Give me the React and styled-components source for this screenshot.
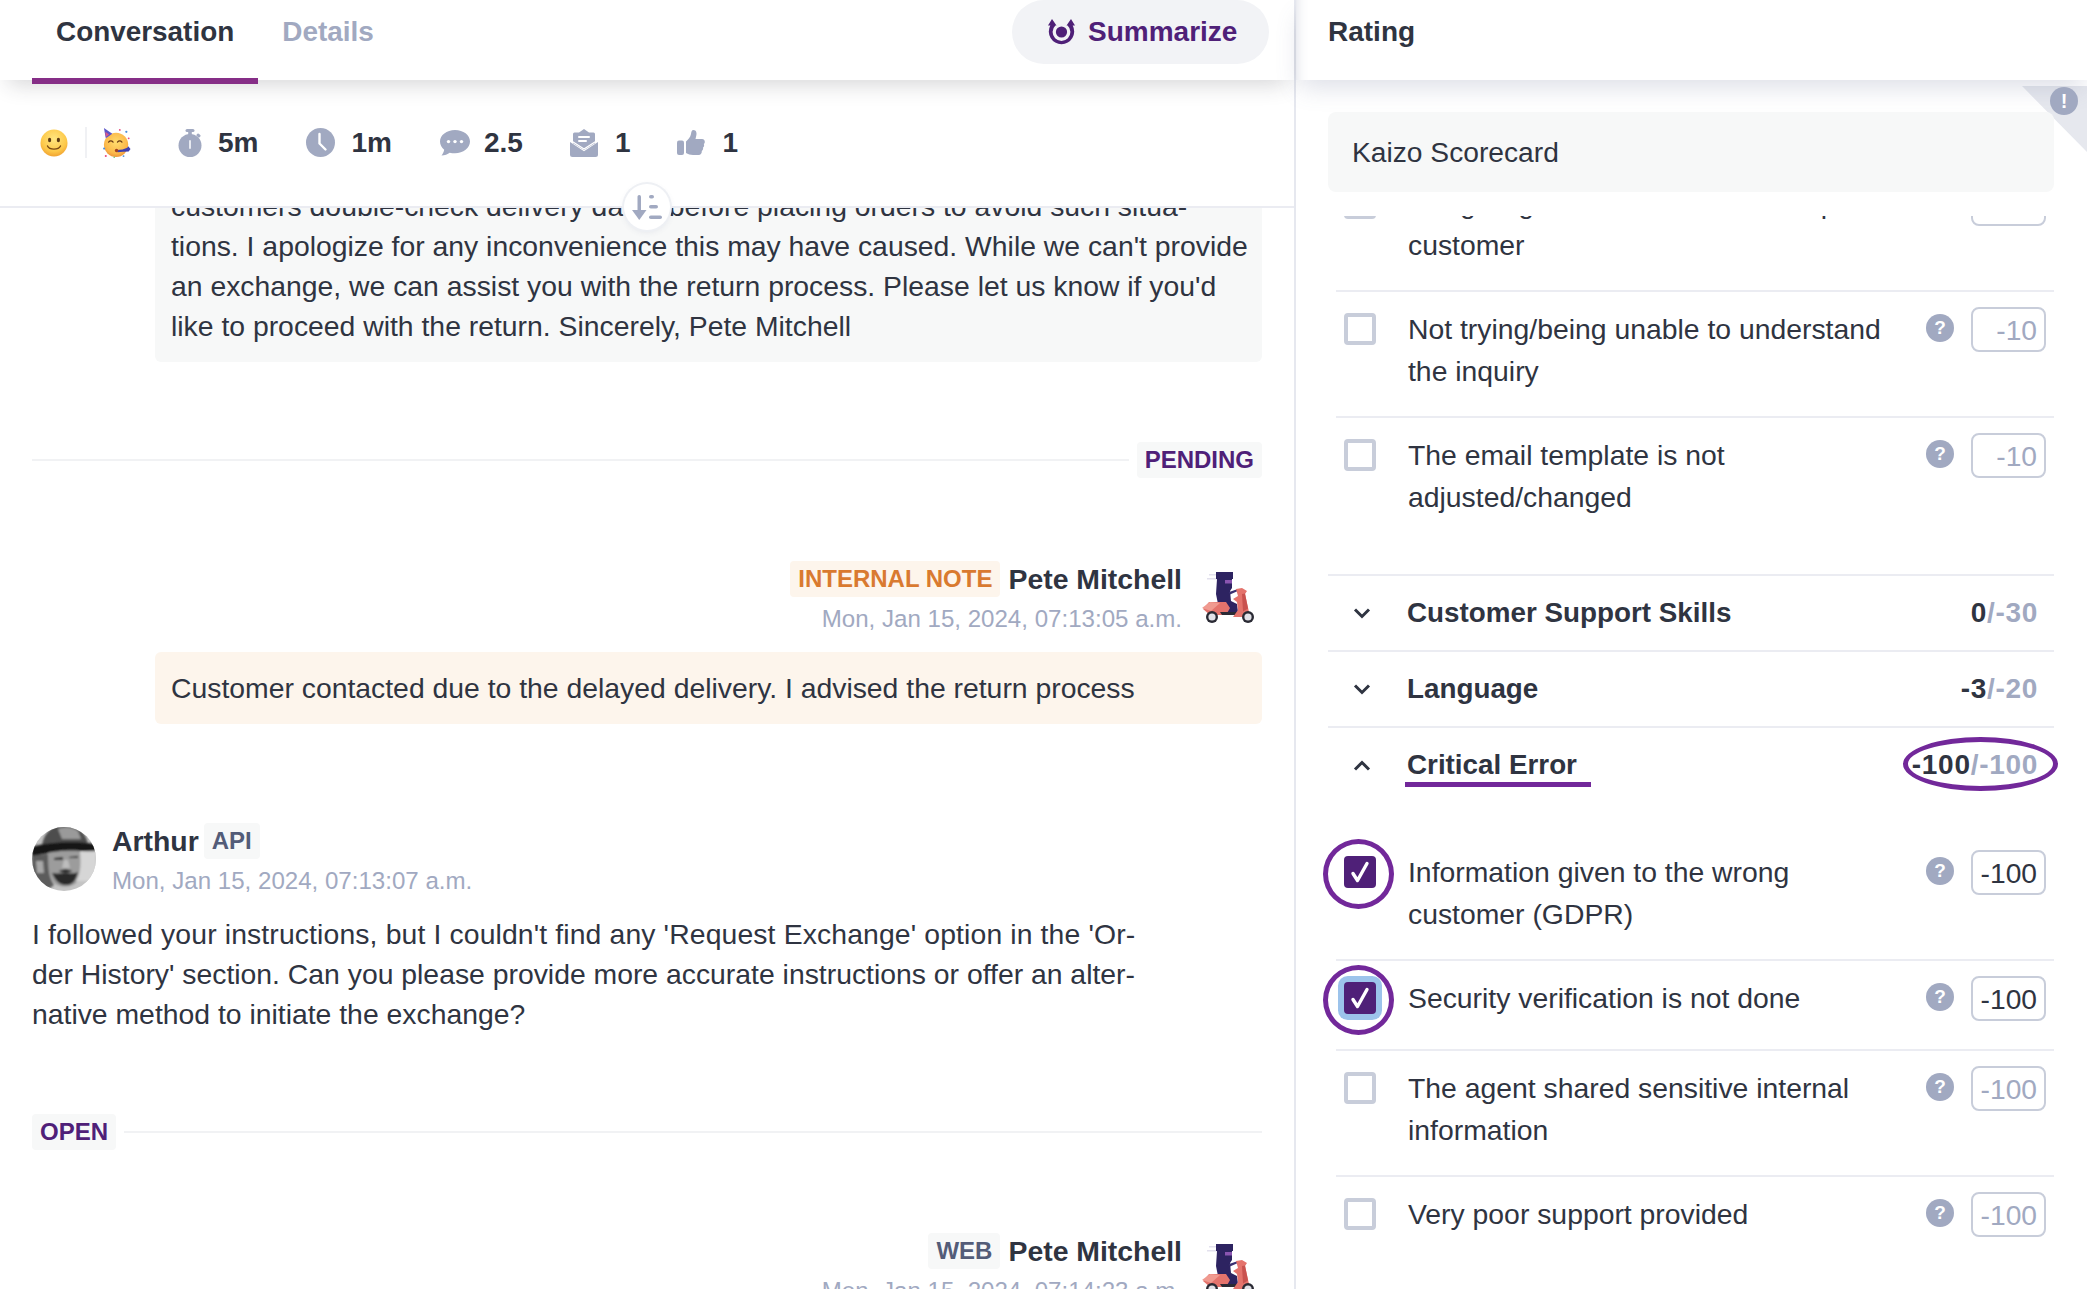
import React from "react";
import styled, { createGlobalStyle } from "styled-components";

const ink = "#2f3441";
const muted = "#a1a9c1";
const purple = "#4f2078";
const ring = "#72289a";
const line = "#ebecf2";
const soft = "#f7f8f8";

const Global = createGlobalStyle`
  html, body { margin: 0; padding: 0; height: 100%; background: #fff; }
  body { font-family: "Liberation Sans", Arial, sans-serif; color: ${ink}; overflow: hidden; }
  * { box-sizing: border-box; }
`;

const Page = styled.div`
  display: flex;
  width: 2087px;
  height: 1289px;
  overflow: hidden;
  background: #fff;
`;

const LeftPanel = styled.section`
  display: flex;
  flex-direction: column;
  width: 1296px;
  flex: none;
  border-right: 2px solid #e6e8ef;
`;

const TabBar = styled.header`
  position: relative;
  z-index: 3;
  display: flex;
  align-items: flex-start;
  height: 80px;
  flex: none;
  padding: 0 25px 0 32px;
  background: #fff;
  box-shadow: 0 12px 22px -8px rgba(40, 40, 50, 0.2);
`;

const Tab = styled.div`
  height: 84px;
  padding: 14px 24px 0;
  font-size: 27.9px;
  line-height: 36px;
  font-weight: 700;
  color: ${(p) => (p.$active ? ink : muted)};
  border-bottom: 6px solid ${(p) => (p.$active ? "#862e87" : "transparent")};
`;

const SummarizeButton = styled.button`
  display: flex;
  align-items: center;
  gap: 13px;
  height: 64px;
  width: 257px;
  margin-left: auto;
  padding: 0 0 0 36px;
  border: 0;
  border-radius: 32px;
  background: #f2f3f6;
  color: ${purple};
  font: 700 28px/36px "Liberation Sans", Arial, sans-serif;
`;

const StatBar = styled.div`
  position: relative;
  z-index: 2;
  display: flex;
  align-items: center;
  height: 128px;
  flex: none;
  padding: 0 0 1px 40px;
  background: #fff;
  border-bottom: 2px solid ${line};
`;

const EmojiDivider = styled.span`
  width: 2px;
  height: 31px;
  margin: 0 16px 0 17px;
  background: #f0f1f4;
`;

const Stat = styled.div`
  display: flex;
  align-items: center;
  gap: ${(p) => p.$gap || 16}px;
  margin-left: ${(p) => p.$left}px;
  font-size: 28px;
  line-height: 36px;
  font-weight: 700;
`;

const SortButton = styled.div`
  position: absolute;
  left: 624px;
  bottom: -24px;
  display: flex;
  align-items: center;
  justify-content: center;
  width: 46px;
  height: 46px;
  border-radius: 50%;
  background: #fff;
  box-shadow: 0 0 0 2px #eef0f4, 0 2px 6px rgba(90, 100, 140, 0.12);
`;

const Thread = styled.div`
  flex: 1;
  overflow: hidden;
  padding: 0 32px;
`;

const ThreadInner = styled.div`
  margin-top: -22px;
`;

const Bubble = styled.div`
  margin: ${(p) => p.$top || 0}px 0 0 123px;
  padding: ${(p) => (p.$note ? "16px" : "0 16px 16px")};
  background: ${(p) => (p.$note ? "#fdf5ec" : soft)};
  border-radius: ${(p) => (p.$note ? "6px" : "0 0 6px 6px")};
  font-size: 28.35px;
  line-height: 40px;
  white-space: nowrap;
`;

const StatusRow = styled.div`
  display: flex;
  align-items: center;
  gap: 8px;
  margin-top: ${(p) => p.$top}px;
`;

const Rule = styled.span`
  flex: 1;
  height: 2px;
  background: #f1f2f4;
`;

const Tag = styled.span`
  display: inline-block;
  height: 36px;
  padding: 0 8px;
  border-radius: 4px;
  font-size: 24px;
  line-height: 36px;
  font-weight: 700;
  background: ${(p) => p.$bg || soft};
  color: ${(p) => p.$color || purple};
`;

const AgentHead = styled.div`
  display: flex;
  justify-content: flex-end;
  margin-top: ${(p) => p.$top}px;
`;

const AgentText = styled.div`
  display: flex;
  flex-direction: column;
  align-items: flex-end;
  gap: 4px;
`;

const NameRow = styled.div`
  display: flex;
  align-items: center;
  gap: ${(p) => p.$gap || 8}px;
`;

const Name = styled.span`
  font-size: 28.4px;
  line-height: 36px;
  font-weight: 700;
`;

const Time = styled.span`
  font-size: 24.1px;
  line-height: 36px;
  color: ${muted};
  white-space: nowrap;
`;

const AgentAvatar = styled.div`
  flex: none;
  width: 54px;
  height: 52px;
  margin: 11px 6px 0 20px;
`;

const CustomerHead = styled.div`
  display: flex;
  gap: 16px;
  margin-top: 99px;
`;

const CustomerAvatar = styled.div`
  flex: none;
  width: 64px;
  height: 64px;
  margin-top: 4px;
  border-radius: 50%;
  overflow: hidden;
`;

const CustomerText = styled.div`
  display: flex;
  flex-direction: column;
  gap: 4px;
`;

const CustomerMessage = styled.p`
  margin: 15px 0 0;
  font-size: 28.35px;
  line-height: 40px;
  white-space: nowrap;
`;

const WideLine = styled.span`
  letter-spacing: 0.13px;
`;

const RightPanel = styled.aside`
  position: relative;
  display: flex;
  flex-direction: column;
  flex: 1;
  min-width: 0;
`;

const RatingBar = styled.header`
  position: relative;
  z-index: 3;
  height: 80px;
  flex: none;
  padding: 14px 32px;
  background: #fff;
  font-size: 28px;
  line-height: 36px;
  font-weight: 700;
  box-shadow: 0 12px 24px -4px rgba(90, 100, 140, 0.2), inset 14px 0 12px -14px rgba(90, 100, 140, 0.25);
`;

const CornerFold = styled.div`
  position: absolute;
  z-index: 1;
  top: 86px;
  right: 0;
  width: 65px;
  height: 66px;
  background: #e6e8ee;
  clip-path: polygon(0 0, 100% 0, 100% 100%);
`;

const CornerBadge = styled.span`
  position: absolute;
  z-index: 4;
  top: 87px;
  right: 9px;
  display: flex;
  align-items: center;
  justify-content: center;
  width: 28px;
  height: 28px;
  border-radius: 50%;
  background: ${muted};
  color: #fff;
  font-size: 20px;
  font-weight: 700;
`;

const ScorecardName = styled.div`
  position: relative;
  z-index: 2;
  height: 80px;
  flex: none;
  margin: 32px 33px 24px 32px;
  padding: 0 24px;
  border-radius: 8px;
  background: ${soft};
  font-size: 28.2px;
  line-height: 80px;
`;

const ScoreList = styled.div`
  flex: 1;
  overflow: hidden;
  padding: 0 33px 0 32px;
`;

const ScoreInner = styled.div`
  margin-top: -50px;
`;

const ScoreRows = styled.div`
  padding-bottom: ${(p) => p.$bottom || 0}px;
  padding-top: ${(p) => p.$top || 0}px;
`;

const ScoreRow = styled.div`
  position: relative;
  display: flex;
  align-items: flex-start;
  min-height: 90px;
  margin-left: 8px;
  padding: 15px 8px 24px;
  border-top: 2px solid ${line};
  &:first-child {
    border-top: 0;
    min-height: 88px;
  }
`;

const CheckBox = styled.span`
  position: relative;
  flex: none;
  display: flex;
  align-items: center;
  justify-content: center;
  width: 32px;
  height: 32px;
  margin: 6px 32px 0 0;
  border-radius: 4px;
  background: ${(p) => (p.$checked ? purple : "#fff")};
  border: ${(p) => (p.$checked ? "0" : "4px solid #c8cdda")};
  box-shadow: ${(p) => (p.$focus ? "0 0 0 6px #9cc3eb" : "none")};
`;

const CheckRing = styled.span`
  position: absolute;
  top: -17px;
  left: -21px;
  width: 71px;
  height: 70px;
  border: 5px solid ${ring};
  border-radius: 50%;
`;

const RowLabel = styled.div`
  flex: 1;
  margin: 1px 16px 0 0;
  font-size: 28.35px;
  line-height: 42px;
`;

const HelpDot = styled.span`
  flex: none;
  display: flex;
  align-items: center;
  justify-content: center;
  width: 28px;
  height: 28px;
  margin: 7px 17px 0 0;
  border-radius: 50%;
  background: ${muted};
  color: #fff;
  font-size: 19px;
  font-weight: 700;
`;

const PointsBox = styled.div`
  flex: none;
  width: 75px;
  height: 45px;
  padding-right: 7px;
  border: 2px solid #c8cdda;
  border-radius: 8px;
  text-align: right;
  font-size: 28.2px;
  line-height: 43px;
  color: ${(p) => (p.$on ? ink : muted)};
`;

const SectionHead = styled.div`
  display: flex;
  align-items: center;
  height: 76px;
  padding: 0 16px 0 25px;
  border-top: 2px solid ${line};
`;

const Chevron = styled.svg`
  flex: none;
  width: 18px;
  height: 11px;
  margin-right: 36px;
  fill: none;
  stroke: ${ink};
  stroke-width: 3;
`;

const SectionTitle = styled.span`
  position: relative;
  font-size: 27.8px;
  line-height: 36px;
  font-weight: 700;
  ${(p) =>
    p.$marked &&
    `&::after {
      content: "";
      position: absolute;
      left: -2px;
      right: -14px;
      bottom: -4px;
      height: 5px;
      background: ${ring};
    }`}
`;

const SectionScore = styled.span`
  position: relative;
  margin-left: auto;
  font-size: 28px;
  letter-spacing: 0.7px;
  line-height: 36px;
  font-weight: 700;
  color: ${muted};
  b {
    color: ${ink};
  }
`;

const ScoreRing = styled.span`
  position: absolute;
  top: -10px;
  left: -9px;
  right: -20px;
  bottom: -8px;
  border: 5px solid ${ring};
  border-radius: 50%;
`;

function SmileEmoji() {
  return (
    <svg width="28" height="28" viewBox="0 0 28 28">
      <defs>
        <radialGradient id="sm" cx="50%" cy="35%" r="70%">
          <stop offset="0%" stopColor="#ffe680" />
          <stop offset="65%" stopColor="#fdc94a" />
          <stop offset="100%" stopColor="#ee9a2c" />
        </radialGradient>
      </defs>
      <circle cx="14" cy="14" r="13.5" fill="url(#sm)" />
      <ellipse cx="9.6" cy="11" rx="1.6" ry="2.3" fill="#5c3a14" />
      <ellipse cx="18.4" cy="11" rx="1.6" ry="2.3" fill="#5c3a14" />
      <path d="M7.5 17c2 4.2 11 4.2 13 0" fill="none" stroke="#7a4a14" strokeWidth="1.4" strokeLinecap="round" />
    </svg>
  );
}

function PartyEmoji() {
  return (
    <svg width="28" height="30" viewBox="0 0 30 32">
      <defs>
        <radialGradient id="pf" cx="50%" cy="40%" r="65%">
          <stop offset="0%" stopColor="#ffdc6e" />
          <stop offset="70%" stopColor="#fbb84a" />
          <stop offset="100%" stopColor="#e98a34" />
        </radialGradient>
      </defs>
      <circle cx="14" cy="18" r="13" fill="url(#pf)" />
      <path d="M1 0l9 6-7 5z" fill="#5a55c8" />
      <path d="M2.5 4l4 3-3.500 2.500z" fill="#d9578a" />
      <path d="M6 15c1.500-1.800 3.300-1.800 4.800 0M15.500 15c1.500-1.800 3.300-1.800 4.800 0" fill="none" stroke="#6a3a14" strokeWidth="1.4" strokeLinecap="round" />
      <path d="M15 23.5l6-.5 5-2 1-1.500 2.500 3-2 2.500-6 .5-6 .5z" fill="#3f3fb0" />
      <circle cx="14.5" cy="24" r="1.8" fill="#a3401e" />
      <circle cx="25" cy="4" r="1.2" fill="#4c8fd8" />
      <circle cx="18" cy="2" r="1" fill="#e8497a" />
      <circle cx="1.2" cy="22" r="1.1" fill="#4c8fd8" />
      <circle cx="3" cy="30" r="1.1" fill="#e8497a" />
      <circle cx="12" cy="31.2" r="0.8" fill="#5bbf6a" />
      <circle cx="22" cy="30" r="1" fill="#4c8fd8" />
      <circle cx="27.5" cy="11" r="1" fill="#e8497a" />
    </svg>
  );
}

function TimerIcon() {
  return (
    <svg width="24" height="28" viewBox="0 0 24 28" fill={muted}>
      <rect x="7.5" y="0" width="9" height="3" rx="1.5" />
      <rect x="10.2" y="2" width="3.6" height="5" />
      <rect x="18.5" y="5" width="4" height="3" rx="1" transform="rotate(42 20.5 6.5)" />
      <circle cx="12" cy="16.5" r="11.5" />
      <rect x="11" y="11" width="2" height="9" rx="1" fill="#fff" opacity="0.75" />
    </svg>
  );
}

function ClockIcon() {
  return (
    <svg width="29" height="29" viewBox="0 0 29 29">
      <circle cx="14.5" cy="14.5" r="14.5" fill={muted} />
      <path d="M13.5 6v9.500l6 6" fill="none" stroke="#fff" strokeWidth="2.4" strokeLinecap="round" strokeLinejoin="round" />
    </svg>
  );
}

function ChatIcon() {
  return (
    <svg width="30" height="26" viewBox="0 0 30 26">
      <path d="M15 0C6.700 0 0 5.200 0 11.600c0 3.200 1.600 6 4.200 8.100-.3 2.200-1.400 4.200-2.700 5.800 3.200-.1 6.200-1.200 8.200-2.800 1.700.5 3.400.6 5.300.6 8.300 0 15-5.200 15-11.700S23.300 0 15 0z" fill={muted} />
      <circle cx="8.5" cy="11.6" r="1.7" fill="#fff" />
      <circle cx="15" cy="11.6" r="1.7" fill="#fff" />
      <circle cx="21.5" cy="11.6" r="1.7" fill="#fff" />
    </svg>
  );
}

function MailIcon() {
  return (
    <svg width="28" height="28" viewBox="0 0 28 28">
      <path d="M14 0l5 3.500h4.500a1.500 1.500 0 0 1 1.500 1.500v9.200L14 21 3 14.200V5a1.500 1.500 0 0 1 1.500-1.500H9z" fill={muted} />
      <rect x="8" y="7" width="12" height="2" rx="1" fill="#fff" />
      <rect x="8" y="11" width="9" height="2" rx="1" fill="#fff" />
      <path d="M0 13l14 9.200L28 13v12.500a2.500 2.500 0 0 1-2.500 2.500h-23A2.500 2.500 0 0 1 0 25.500z" fill={muted} />
      <path d="M0 11l14 9L28 11" fill="none" stroke="#fff" strokeWidth="1.4" />
    </svg>
  );
}

function ThumbIcon() {
  return (
    <svg width="28" height="25" viewBox="0 0 28 25" fill={muted}>
      <rect x="0" y="10.5" width="7" height="14.5" rx="2" />
      <path d="M9 11.500c2-1.500 4.500-4.500 5-7.500.3-2 .6-4 2.500-4 2.700 0 3.500 3 2.800 5.500L18.500 9H25c2 0 3 1.500 2.800 3.200-.2 1-.7 1.500-1 1.800.7 1.400.3 2.800-.8 3.600.4 1.400-.1 2.600-1.200 3.300.2 1.900-1 4.100-3.300 4.100H16c-2.700 0-5-1-7-2z" />
    </svg>
  );
}

function SortIcon() {
  return (
    <svg width="30" height="25" viewBox="0 0 30 25" fill={muted}>
      <rect x="5.5" y="0" width="3.5" height="19" rx="1.7" />
      <path d="M0 15h14.500l-7.250 10z" />
      <rect x="17" y="0" width="5" height="3.6" rx="1.8" />
      <rect x="17" y="10" width="9" height="3.6" rx="1.8" />
      <rect x="17" y="20.5" width="13" height="3.6" rx="1.8" />
    </svg>
  );
}

function SummarizeIcon() {
  return (
    <svg width="27" height="26" viewBox="0 0 27 26" fill={purple}>
      <path d="M4 0l4.500 6.500H7.400a8.900 8.900 0 1 0 12.200 0h-1.100L23 0l4 6.500h-2.300a12.700 12.700 0 1 1-22.400 0H0z" />
      <circle cx="13.5" cy="13" r="5.6" />
    </svg>
  );
}

function ScooterAvatar() {
  return (
    <svg width="54" height="52" viewBox="0 0 54 52">
      <path d="M7 2h8v1.500H7zM5 6h10v1.500H5z" fill="#e3e1ee" />
      <path d="M14 0h17v7H14z" fill="#2d2361" />
      <path d="M15 7h15v9l-2 3 1 10 6 3 1 8H17l-1-8-2-10z" fill="#2d2361" />
      <path d="M23 8h7v3.500h-7z" fill="#8a55b0" />
      <path d="M27 20l9-3 1 1.500-9 4z" fill="#3a2f70" />
      <path d="M1 37l6-7h17l4 6-4 7H8z" fill="#e4736c" />
      <path d="M0 36l8-6 10 1-9 8z" fill="#f09a90" />
      <path d="M18 40h18l2 3H20z" fill="#2a2a34" />
      <path d="M31 27l5-3-2-7 6-1 5 3-2 3 4 18 3 5H31l5-7-1-8z" fill="#e4736c" />
      <path d="M40 22l3-.5 3 15-5 3z" fill="#c9524f" />
      <circle cx="10" cy="45" r="6" fill="#2a2a34" />
      <circle cx="10" cy="45" r="3.6" fill="#e2e2e8" />
      <circle cx="46" cy="45" r="6" fill="#2a2a34" />
      <circle cx="46" cy="45" r="3.6" fill="#e2e2e8" />
    </svg>
  );
}

function CowboyAvatar() {
  return (
    <svg width="64" height="64" viewBox="0 0 64 64">
      <defs>
        <filter id="soft">
          <feGaussianBlur stdDeviation="0.8" />
        </filter>
      </defs>
      <rect width="64" height="64" fill="#c4c4c4" />
      <g filter="url(#soft)">
        <path d="M10 18C12 6 20-2 32-2s22 6 24 20z" fill="#4e4e4e" />
        <path d="M26 2c6-3 16-2 20 2l3 8H30z" fill="#9a9a9a" />
        <path d="M0 20c14-5 44-6 64-3v8c-18-2-46-1-64 5z" fill="#161616" />
        <path d="M16 26c8-2 22-3 32-2 3 10 2 24-4 32-6 5-16 5-22 0-5-6-7-20-6-30z" fill="#9c9c9c" />
        <path d="M0 29c4-1 10-2 16-2 0 14 1 24 6 31l-8 6H0z" fill="#5c5c5c" />
        <path d="M4 34h7l1 12H5z" fill="#a8a8a8" />
        <path d="M48 25l16-1v30H44c5-8 5-18 4-29z" fill="#d6d6d6" />
        <path d="M22 31l9-1v3h-9zM37 30l9-1v2h-9z" fill="#2b2b2b" />
        <path d="M20 46c3 6 6 12 14 12s10-6 12-13c-3 2-7 1-12 1s-9 1-14 0z" fill="#2c2c2c" />
        <path d="M27 44c4-2 9-2 13 0-4 2-9 2-13 0z" fill="#0f0f0f" />
        <path d="M32 33h4l2 8h-8z" fill="#bdbdbd" />
      </g>
    </svg>
  );
}

function Check() {
  return (
    <svg width="22" height="24" viewBox="0 0 22 24" fill="none">
      <path d="M4 13.500l4.500 7L18 3.500" stroke="#fff" strokeWidth="3.4" strokeLinecap="round" strokeLinejoin="round" />
    </svg>
  );
}

function Criterion({ label, points, checked, focus }) {
  return (
    <ScoreRow>
      <CheckBox $checked={checked} $focus={focus}>
        {checked && <Check />}
        {checked && <CheckRing />}
      </CheckBox>
      <RowLabel>{label}</RowLabel>
      <HelpDot>?</HelpDot>
      <PointsBox $on={checked}>{points}</PointsBox>
    </ScoreRow>
  );
}

function Section({ title, got, max, open, marked }) {
  return (
    <SectionHead>
      <Chevron viewBox="0 0 18 11">
        <path d={open ? "M2 9.500L9 2.500l7 7" : "M2 1.500l7 7 7-7"} />
      </Chevron>
      <SectionTitle $marked={marked}>{title}</SectionTitle>
      <SectionScore>
        <b>{got}</b>
        {max}
        {marked && <ScoreRing />}
      </SectionScore>
    </SectionHead>
  );
}

export default function App() {
  return (
    <Page>
      <Global />
      <LeftPanel>
        <TabBar>
          <Tab $active>Conversation</Tab>
          <Tab>Details</Tab>
          <SummarizeButton>
            <SummarizeIcon />
            Summarize
          </SummarizeButton>
        </TabBar>
        <StatBar>
          <SmileEmoji />
          <EmojiDivider />
          <PartyEmoji />
          <Stat $left={47}>
            <TimerIcon />
            5m
          </Stat>
          <Stat $left={48}>
            <ClockIcon />
            1m
          </Stat>
          <Stat $left={48} $gap={14}>
            <ChatIcon />
            2.5
          </Stat>
          <Stat $left={47} $gap={17}>
            <MailIcon />1
          </Stat>
          <Stat $left={47} $gap={17}>
            <ThumbIcon />1
          </Stat>
          <SortButton>
            <SortIcon />
          </SortButton>
        </StatBar>
        <Thread>
          <ThreadInner>
            <Bubble>
              customers double-check delivery dates before placing orders to avoid such situa-
              <br />
              tions. I apologize for any inconvenience this may have caused. While we can't provide
              <br />
              an exchange, we can assist you with the return process. Please let us know if you'd
              <br />
              like to proceed with the return. Sincerely, Pete Mitchell
            </Bubble>
            <StatusRow $top={80}>
              <Rule />
              <Tag>PENDING</Tag>
            </StatusRow>
            <AgentHead $top={83}>
              <AgentText>
                <NameRow>
                  <Tag $bg="#fdf5ec" $color="#d97a30">
                    INTERNAL NOTE
                  </Tag>
                  <Name>Pete Mitchell</Name>
                </NameRow>
                <Time>Mon, Jan 15, 2024, 07:13:05 a.m.</Time>
              </AgentText>
              <AgentAvatar>
                <ScooterAvatar />
              </AgentAvatar>
            </AgentHead>
            <Bubble $note $top={15}>
              Customer contacted due to the delayed delivery. I advised the return process
            </Bubble>
            <CustomerHead>
              <CustomerAvatar>
                <CowboyAvatar />
              </CustomerAvatar>
              <CustomerText>
                <NameRow $gap={5}>
                  <Name>Arthur</Name>
                  <Tag $color="#535c78">API</Tag>
                </NameRow>
                <Time>Mon, Jan 15, 2024, 07:13:07 a.m.</Time>
              </CustomerText>
            </CustomerHead>
            <CustomerMessage>
              <WideLine>I followed your instructions, but I couldn't find any 'Request Exchange' option in the 'Or-</WideLine>
              <br />
              der History' section. Can you please provide more accurate instructions or offer an alter-
              <br />
              native method to initiate the exchange?
            </CustomerMessage>
            <StatusRow $top={80}>
              <Tag>OPEN</Tag>
              <Rule />
            </StatusRow>
            <AgentHead $top={83}>
              <AgentText>
                <NameRow>
                  <Tag $color="#535c78">WEB</Tag>
                  <Name>Pete Mitchell</Name>
                </NameRow>
                <Time>Mon, Jan 15, 2024, 07:14:23 a.m.</Time>
              </AgentText>
              <AgentAvatar>
                <ScooterAvatar />
              </AgentAvatar>
            </AgentHead>
          </ThreadInner>
        </Thread>
      </LeftPanel>
      <RightPanel>
        <RatingBar>Rating</RatingBar>
        <CornerFold />
        <CornerBadge>!</CornerBadge>
        <ScorecardName>Kaizo Scorecard</ScorecardName>
        <ScoreList>
          <ScoreInner>
            <ScoreRows $bottom={32}>
              <Criterion label="Not giving the correct answer/help to customer" points="-10" />
              <Criterion label="Not trying/being unable to understand the inquiry" points="-10" />
              <Criterion label="The email template is not adjusted/changed" points="-10" />
            </ScoreRows>
            <Section title="Customer Support Skills" got="0" max="/-30" />
            <Section title="Language" got="-3" max="/-20" />
            <Section title="Critical Error" got="-100" max="/-100" open marked />
            <ScoreRows $top={33}>
              <Criterion label="Information given to the wrong customer (GDPR)" points="-100" checked />
              <Criterion label="Security verification is not done" points="-100" checked focus />
              <Criterion label="The agent shared sensitive internal information" points="-100" />
              <Criterion label="Very poor support provided" points="-100" />
            </ScoreRows>
          </ScoreInner>
        </ScoreList>
      </RightPanel>
    </Page>
  );
}
